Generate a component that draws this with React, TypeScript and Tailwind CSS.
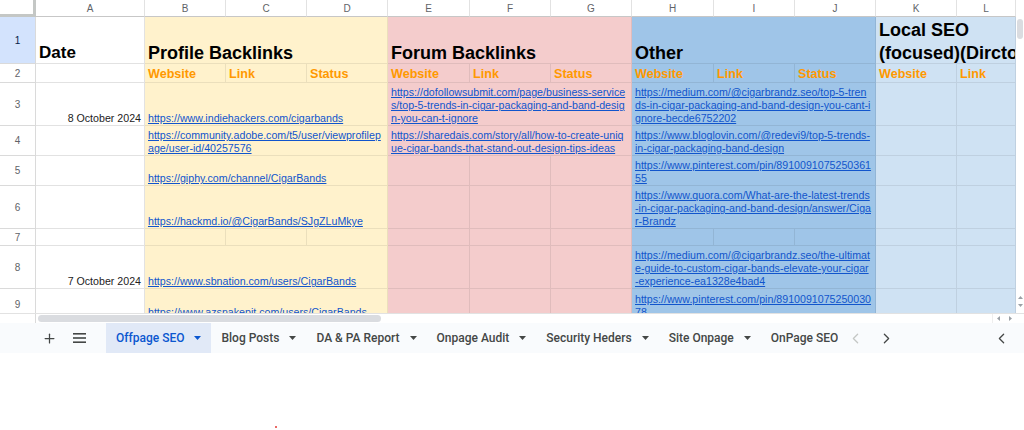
import { ChevronLeft, ChevronRight, Plus } from "lucide-react";
import type { ReactNode } from "react";

const bgs = {
  w: "bg-white border-[#e2e2e2]",
  y: "bg-[#fff2cc] border-[#ebdfbc]",
  p: "bg-[#f4cccc] border-[#e0bcbc]",
  b: "bg-[#9fc5e8] border-[#92b5d5]",
  l: "bg-[#cfe2f3] border-[#bfd0e0]",
};
type Bg = keyof typeof bgs;
const spans = { 1: "", 2: "col-span-2", 3: "col-span-3" };

function Cell({
  bg = "w",
  span = 1,
  right = false,
  children,
}: {
  bg?: Bg;
  span?: 1 | 2 | 3;
  right?: boolean;
  children?: ReactNode;
}) {
  return (
    <div
      className={`${bgs[bg]} ${spans[span]} border-r border-b overflow-hidden min-w-0 flex flex-col justify-end px-[3px] ${
        right ? "items-end" : ""
      }`}
    >
      {children}
    </div>
  );
}

function Link({ lines }: { lines: string[] }) {
  return (
    <div className="text-[10.65px] leading-[13px] text-[#1155cc]">
      {lines.map((l) => (
        <div key={l} className="underline whitespace-nowrap">
          {l}
        </div>
      ))}
    </div>
  );
}

function Title({ children }: { children: ReactNode }) {
  return <div className="text-[18px] leading-[20px] font-bold text-black whitespace-nowrap">{children}</div>;
}

function Sub({ children }: { children: ReactNode }) {
  return <div className="text-[12.6px] leading-[15px] font-bold text-[#ff9900] whitespace-nowrap">{children}</div>;
}

function Date({ children }: { children: ReactNode }) {
  return <div className="text-[10.65px] leading-[13px] text-[#222] whitespace-nowrap">{children}</div>;
}

function RowNum({ n, active = false }: { n: number; active?: boolean }) {
  return (
    <div
      className={`${
        active ? "bg-[#d3e3fd] text-[#041e49]" : "bg-white text-[#5f6368]"
      } border-r border-b border-[#dadada] text-[10px] flex items-center justify-center`}
    >
      {n}
    </div>
  );
}

const letters = ["A", "B", "C", "D", "E", "F", "G", "H", "I", "J", "K", "L"];

function Caret({ color = "#444746" }: { color?: string }) {
  return (
    <svg width="7" height="4" viewBox="0 0 7 4">
      <polygon points="0,0 7,0 3.5,4" fill={color} />
    </svg>
  );
}

const tabs = ["Blog Posts", "DA & PA Report", "Onpage Audit", "Security Heders", "Site Onpage"];

export default function App() {
  return (
    <div className="w-[1024px] h-[430px] bg-white overflow-hidden font-['Liberation_Sans',Arial,sans-serif]">
      <div className="flex h-[313px]">
        <div className="grid w-[1016px] h-[313px] overflow-hidden grid-cols-[36px_109px_81px_81px_81px_82px_81px_81px_82px_81px_81px_81px_59px] grid-rows-[17px_47px_19px_43px_30px_30px_43px_17px_43px_31px]">
          {/* column headers */}
          <div className="bg-white border-r-[3px] border-b-[3px] border-[#c4c7c5]" />
          {letters.map((l) => (
            <div
              key={l}
              className="bg-white border-r border-b border-r-[#e2e2e2] border-b-[#c7c7c7] text-[10px] text-[#5f6368] flex items-center justify-center"
            >
              {l}
            </div>
          ))}

          {/* row 1 */}
          <RowNum n={1} active />
          <Cell>
            <div className="text-[17px] leading-[20px] font-bold text-black">Date</div>
          </Cell>
          <Cell bg="y" span={3}>
            <Title>Profile Backlinks</Title>
          </Cell>
          <Cell bg="p" span={3}>
            <Title>Forum Backlinks</Title>
          </Cell>
          <Cell bg="b" span={3}>
            <Title>Other</Title>
          </Cell>
          <Cell bg="l" span={2}>
            <div className="text-[18px] leading-[23px] font-bold text-black whitespace-nowrap relative top-[2px]">
              <div>Local SEO</div>
              <div>(focused)(Dirctory Submission)</div>
            </div>
          </Cell>

          {/* row 2 */}
          <RowNum n={2} />
          <Cell />
          <Cell bg="y"><Sub>Website</Sub></Cell>
          <Cell bg="y"><Sub>Link</Sub></Cell>
          <Cell bg="y"><Sub>Status</Sub></Cell>
          <Cell bg="p"><Sub>Website</Sub></Cell>
          <Cell bg="p"><Sub>Link</Sub></Cell>
          <Cell bg="p"><Sub>Status</Sub></Cell>
          <Cell bg="b"><Sub>Website</Sub></Cell>
          <Cell bg="b"><Sub>Link</Sub></Cell>
          <Cell bg="b"><Sub>Status</Sub></Cell>
          <Cell bg="l"><Sub>Website</Sub></Cell>
          <Cell bg="l"><Sub>Link</Sub></Cell>

          {/* row 3 */}
          <RowNum n={3} />
          <Cell right>
            <Date>8 October 2024</Date>
          </Cell>
          <Cell bg="y" span={3}>
            <Link lines={["https://www.indiehackers.com/cigarbands"]} />
          </Cell>
          <Cell bg="p" span={3}>
            <Link
              lines={[
                "https://dofollowsubmit.com/page/business-service",
                "s/top-5-trends-in-cigar-packaging-and-band-desig",
                "n-you-can-t-ignore",
              ]}
            />
          </Cell>
          <Cell bg="b" span={3}>
            <Link
              lines={[
                "https://medium.com/@cigarbrandz.seo/top-5-tren",
                "ds-in-cigar-packaging-and-band-design-you-cant-i",
                "gnore-becde6752202",
              ]}
            />
          </Cell>
          <Cell bg="l" />
          <Cell bg="l" />

          {/* row 4 */}
          <RowNum n={4} />
          <Cell />
          <Cell bg="y" span={3}>
            <Link lines={["https://community.adobe.com/t5/user/viewprofilep", "age/user-id/40257576"]} />
          </Cell>
          <Cell bg="p" span={3}>
            <Link
              lines={[
                "https://sharedais.com/story/all/how-to-create-uniq",
                "ue-cigar-bands-that-stand-out-design-tips-ideas",
              ]}
            />
          </Cell>
          <Cell bg="b" span={3}>
            <Link lines={["https://www.bloglovin.com/@redevi9/top-5-trends-", "in-cigar-packaging-band-design"]} />
          </Cell>
          <Cell bg="l" />
          <Cell bg="l" />

          {/* row 5 */}
          <RowNum n={5} />
          <Cell />
          <Cell bg="y" span={3}>
            <Link lines={["https://giphy.com/channel/CigarBands"]} />
          </Cell>
          <Cell bg="p" />
          <Cell bg="p" />
          <Cell bg="p" />
          <Cell bg="b" span={3}>
            <Link lines={["https://www.pinterest.com/pin/8910091075250361", "55"]} />
          </Cell>
          <Cell bg="l" />
          <Cell bg="l" />

          {/* row 6 */}
          <RowNum n={6} />
          <Cell />
          <Cell bg="y" span={3}>
            <Link lines={["https://hackmd.io/@CigarBands/SJgZLuMkye"]} />
          </Cell>
          <Cell bg="p" />
          <Cell bg="p" />
          <Cell bg="p" />
          <Cell bg="b" span={3}>
            <Link
              lines={[
                "https://www.quora.com/What-are-the-latest-trends",
                "-in-cigar-packaging-and-band-design/answer/Ciga",
                "r-Brandz",
              ]}
            />
          </Cell>
          <Cell bg="l" />
          <Cell bg="l" />

          {/* row 7 */}
          <RowNum n={7} />
          <Cell />
          <Cell bg="y" />
          <Cell bg="y" />
          <Cell bg="y" />
          <Cell bg="p" />
          <Cell bg="p" />
          <Cell bg="p" />
          <Cell bg="b" />
          <Cell bg="b" />
          <Cell bg="b" />
          <Cell bg="l" />
          <Cell bg="l" />

          {/* row 8 */}
          <RowNum n={8} />
          <Cell right>
            <Date>7 October 2024</Date>
          </Cell>
          <Cell bg="y" span={3}>
            <Link lines={["https://www.sbnation.com/users/CigarBands"]} />
          </Cell>
          <Cell bg="p" />
          <Cell bg="p" />
          <Cell bg="p" />
          <Cell bg="b" span={3}>
            <Link
              lines={[
                "https://medium.com/@cigarbrandz.seo/the-ultimat",
                "e-guide-to-custom-cigar-bands-elevate-your-cigar",
                "-experience-ea1328e4bad4",
              ]}
            />
          </Cell>
          <Cell bg="l" />
          <Cell bg="l" />

          {/* row 9 */}
          <RowNum n={9} />
          <Cell />
          <Cell bg="y" span={3}>
            <Link lines={["https://www.azsnakepit.com/users/CigarBands"]} />
          </Cell>
          <Cell bg="p" />
          <Cell bg="p" />
          <Cell bg="p" />
          <Cell bg="b" span={3}>
            <Link lines={["https://www.pinterest.com/pin/8910091075250030", "78"]} />
          </Cell>
          <Cell bg="l" />
          <Cell bg="l" />
        </div>

        {/* vertical scrollbar */}
        <div className="w-[8px] h-[313px] flex flex-col bg-white">
          <div className="h-[17px]" />
          <div className="flex-1">
            <div className="mt-[2px] mx-[1px] h-[20px] rounded-full bg-[#dadce0]" />
          </div>
          <div className="h-[24px] flex flex-col items-center justify-center gap-[5px]">
            <svg width="5" height="3" viewBox="0 0 5 3">
              <polygon points="0,3 5,3 2.5,0" fill="#9aa0a6" />
            </svg>
            <svg width="5" height="3" viewBox="0 0 5 3">
              <polygon points="0,0 5,0 2.5,3" fill="#9aa0a6" />
            </svg>
          </div>
        </div>
      </div>

      {/* horizontal scrollbar */}
      <div className="h-[10px] flex border-t border-[#e2e2e2] bg-white">
        <div className="w-[36px] border-r border-[#dadada]" />
        <div className="ml-[2px] w-[343px] h-[7px] mt-[1px] rounded-full bg-[#dadce0]" />
        <div className="flex-1" />
        <div className="w-[24px] flex items-center justify-around border-l border-[#eeeeee]">
          <svg width="3" height="5" viewBox="0 0 3 5">
            <polygon points="3,0 3,5 0,2.5" fill="#9aa0a6" />
          </svg>
          <svg width="3" height="5" viewBox="0 0 3 5">
            <polygon points="0,0 0,5 3,2.5" fill="#9aa0a6" />
          </svg>
        </div>
        <div className="w-[8px]" />
      </div>

      {/* sheet tabs */}
      <div className="h-[30px] flex items-center bg-[#f9fbfd] font-['Roboto',sans-serif] text-[12px] font-medium text-[#444746]">
        <div className="ml-[34px] w-[30px] flex justify-center">
          <Plus size={15} strokeWidth={2} color="#444746" />
        </div>
        <div className="w-[30px] flex justify-center">
          <svg width="13" height="10" viewBox="0 0 13 10">
            <rect x="0" y="0" width="13" height="1.6" fill="#444746" />
            <rect x="0" y="4.2" width="13" height="1.6" fill="#444746" />
            <rect x="0" y="8.4" width="13" height="1.6" fill="#444746" />
          </svg>
        </div>
        <div className="ml-[12px] w-[732px] h-full flex overflow-hidden">
          <div className="h-full flex items-center gap-[10px] px-[10px] bg-[#e1e9f7] text-[#0b57d0] whitespace-nowrap">
            Offpage SEO
            <Caret color="#0b57d0" />
          </div>
          {tabs.map((t) => (
            <div key={t} className="h-full flex items-center gap-[10px] px-[10px] whitespace-nowrap">
              {t}
              <Caret />
            </div>
          ))}
          <div className="h-full flex items-center px-[10px] whitespace-nowrap">OnPage SEO</div>
        </div>
        <div className="ml-[2px] w-[30px] flex justify-center">
          <ChevronLeft size={17} strokeWidth={1.8} color="#c4c7c5" />
        </div>
        <div className="ml-[1px] w-[30px] flex justify-center">
          <ChevronRight size={17} strokeWidth={1.8} color="#444746" />
        </div>
        <div className="flex-1" />
        <div className="mr-[8px] w-[30px] flex justify-center">
          <ChevronLeft size={17} strokeWidth={1.8} color="#444746" />
        </div>
      </div>

      <div className="pl-[275px] pt-[73px]">
        <div className="w-[2px] h-[2px] rounded-full bg-[#e53935]" />
      </div>
    </div>
  );
}
